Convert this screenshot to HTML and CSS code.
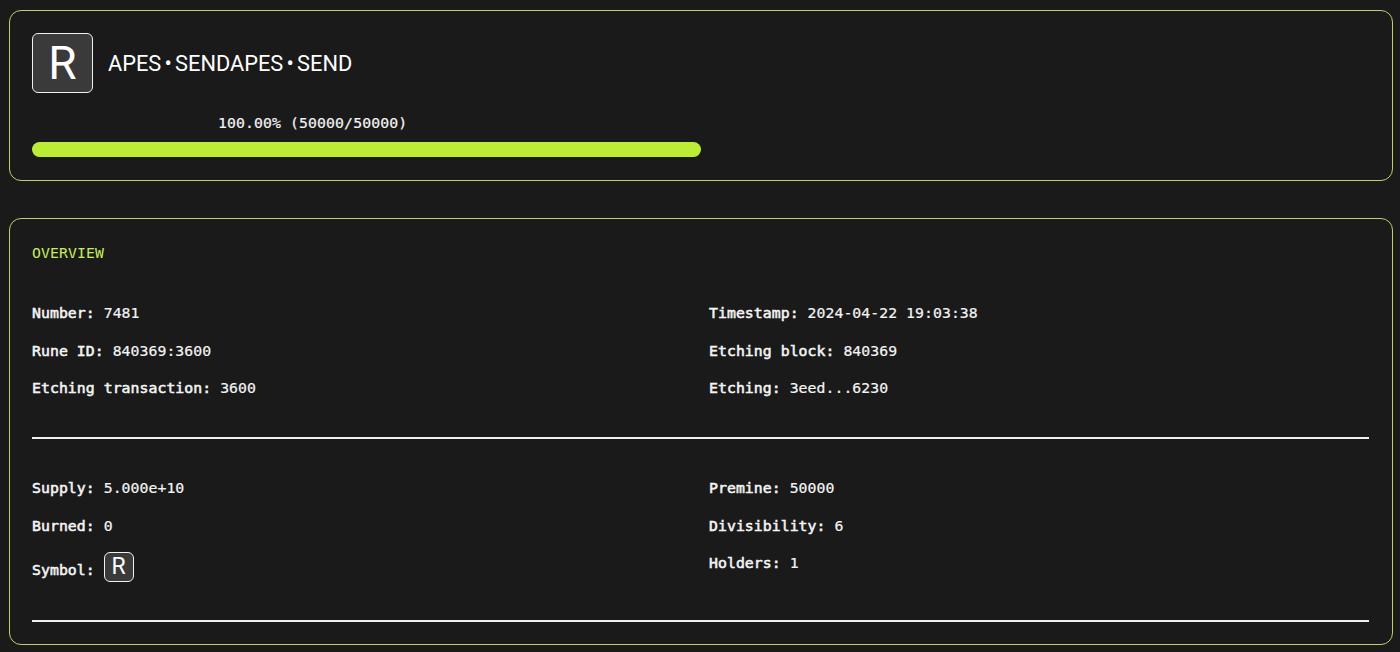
FILE: index.html
```html
<!DOCTYPE html>
<html lang="en">
<head>
<meta charset="utf-8">
<title>APES•SENDAPES•SEND</title>
<link rel="stylesheet" href="styles.css">
</head>
<body>
<main class="page">
  <section class="card card-head">
    <div class="title-row">
      <span class="rune-badge rune-badge-lg">R</span>
      <h1 class="rune-name">APES<span class="spacer">•</span>SENDAPES<span class="spacer">•</span>SEND</h1>
    </div>
    <div class="progress">
      <div class="progress-label">100.00% (50000/50000)</div>
      <div class="progress-bar"></div>
    </div>
  </section>
  <section class="card card-overview">
    <h2 class="section-title">OVERVIEW</h2>
    <div class="info-grid">
      <div class="info-row"><b>Number:</b> 7481</div>
      <div class="info-row"><b>Timestamp:</b> 2024-04-22 19:03:38</div>
      <div class="info-row"><b>Rune ID:</b> 840369:3600</div>
      <div class="info-row"><b>Etching block:</b> 840369</div>
      <div class="info-row"><b>Etching transaction:</b> 3600</div>
      <div class="info-row"><b>Etching:</b> 3eed...6230</div>
    </div>
    <hr class="divider">
    <div class="info-grid">
      <div class="info-row"><b>Supply:</b> 5.000e+10</div>
      <div class="info-row"><b>Premine:</b> 50000</div>
      <div class="info-row"><b>Burned:</b> 0</div>
      <div class="info-row"><b>Divisibility:</b> 6</div>
      <div class="info-row"><b>Symbol:</b> <span class="rune-badge rune-badge-sm">R</span></div>
      <div class="info-row"><b>Holders:</b> 1</div>
    </div>
    <hr class="divider divider-last">
  </section>
</main>
</body>
</html>
```

FILE: styles.css
```css
* { box-sizing: border-box; }
html, body { margin: 0; height: 100%; }
body {
  background: #1a1a1a;
  color: #f4f4f4;
  font-family: "DejaVu Sans Mono", monospace;
  overflow: hidden;
}
.page {
  display: flex;
  flex-direction: column;
  gap: 37px;
  padding: 10px 7px 0 9px;
}
.card {
  border: 1px solid #b8d270;
  border-radius: 12px;
  padding: 22px 23px 22px 22px;
}
.card-head { height: 171px; }
.card-overview { height: 427px; padding-top: 23px; }
.title-row {
  display: flex;
  align-items: center;
  gap: 15px;
}
.rune-badge {
  display: inline-flex;
  align-items: center;
  justify-content: center;
  background: #3a3a3a;
  border: 1px solid #f0f0f0;
  color: #fff;
  font-family: Roboto, sans-serif;
  font-weight: 400;
}
.rune-badge-lg {
  width: 61px;
  height: 60px;
  border-radius: 6px;
  font-size: 46px;
}
.rune-badge-sm {
  width: 30px;
  height: 30px;
  border-radius: 6px;
  font-size: 23px;
  vertical-align: 1px;
  -webkit-text-stroke: 0;
}
.rune-name {
  margin: 1px 0 0;
  font-family: Roboto, sans-serif;
  font-size: 21.8px;
  font-weight: 400;
  color: #fff;
}
.spacer { padding: 0 3.2px; }
.progress { margin-top: 19px; width: 669px; }
.progress-label {
  padding-left: 186px;
  font-size: 14.8px;
  line-height: 22px;
  letter-spacing: 0.1px;
  -webkit-text-stroke: 0.2px;
}
.progress-bar {
  margin-top: 8px;
  height: 15px;
  border-radius: 8px;
  background: #bbed36;
}
.section-title {
  margin: 0 0 38px;
  font-size: 14.8px;
  line-height: 22px;
  font-weight: 400;
  letter-spacing: 0.1px;
  color: #c6ec5a;
}
.info-grid {
  display: grid;
  grid-template-columns: 677px 1fr;
  row-gap: 15.5px;
  align-items: start;
  font-size: 14.8px;
  line-height: 22px;
  letter-spacing: 0.05px;
  -webkit-text-stroke: 0.2px;
}
.info-row { white-space: nowrap; }
.info-row b { font-weight: 400; -webkit-text-stroke: 0.55px; }
.divider {
  margin: 38px 0;
  height: 2px;
  border: 0;
  background: #f0f0f0;
}
.divider-last { margin-bottom: 0; }
```
